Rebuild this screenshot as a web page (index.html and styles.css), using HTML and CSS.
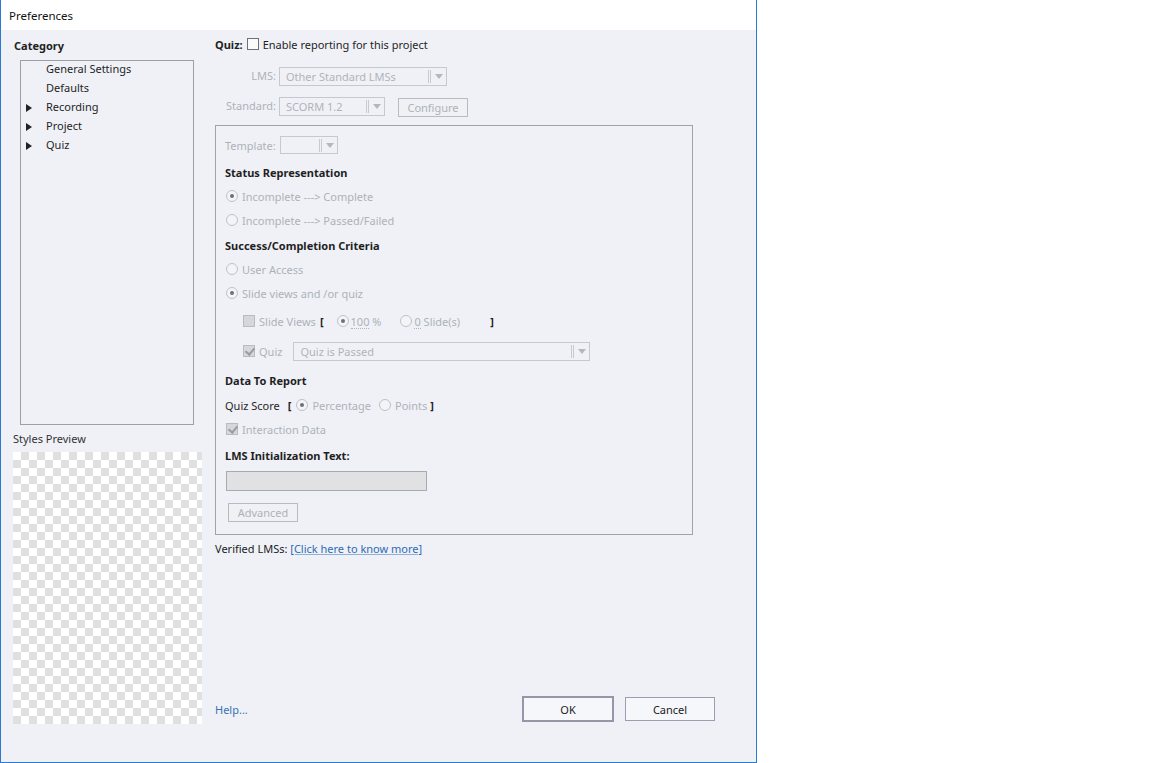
FILE: index.html
```html
<!DOCTYPE html>
<html>
<head>
<meta charset="utf-8">
<link rel="stylesheet" href="styles.css">
</head>
<body>
<div class="window">
  <div class="titlebar">Preferences</div>
  <div class="content">
    <div class="left">
      <div class="cat-title">Category</div>
      <ul class="cat-list">
        <li><span class="arrow"></span>General Settings</li>
        <li><span class="arrow"></span>Defaults</li>
        <li><span class="arrow on"></span>Recording</li>
        <li><span class="arrow on"></span>Project</li>
        <li><span class="arrow on"></span>Quiz</li>
      </ul>
      <div class="preview-label">Styles Preview</div>
      <div class="preview"></div>
    </div>
    <div class="right">
      <div class="quiz-row"><b class="quiz-b">Quiz:</b><span class="cb cb-white"></span><span>Enable reporting for this project</span></div>
      <div class="field-row lms-row">
        <span class="flabel">LMS:</span>
        <div class="dd dd-lms"><span class="dd-text">Other Standard LMSs</span><span class="dd-btn"><span class="sep"></span><span class="tri"></span></span></div>
      </div>
      <div class="field-row std-row">
        <span class="flabel">Standard:</span>
        <div class="dd dd-std"><span class="dd-text">SCORM 1.2</span><span class="dd-btn"><span class="sep"></span><span class="tri"></span></span></div>
        <span class="btn-small cfg">Configure</span>
      </div>
      <div class="group">
        <div class="tpl-row"><span class="dis">Template:</span><div class="dd dd-tpl"><span class="dd-text"></span><span class="dd-btn"><span class="sep"></span><span class="tri"></span></span></div></div>
        <div class="row r-status"><b>Status Representation</b></div>
        <div class="row"><span class="radio on"></span><span class="dis">Incomplete ---&gt; Complete</span></div>
        <div class="row"><span class="radio"></span><span class="dis">Incomplete ---&gt; Passed/Failed</span></div>
        <div class="row r-success"><b>Success/Completion Criteria</b></div>
        <div class="row"><span class="radio"></span><span class="dis">User Access</span></div>
        <div class="row"><span class="radio on"></span><span class="dis">Slide views and /or quiz</span></div>
        <div class="row indent r-slide"><span class="cb cb-dis"></span><span class="dis sv">Slide Views</span><span class="br br-l">[</span><span class="radio on r2"></span><span class="dis"><span class="dot">100</span> %</span><span class="radio r3"></span><span class="dis"><span class="dot">0</span> Slide(s)</span><span class="br br-r">]</span></div>
        <div class="row indent r-quiz"><span class="cb cb-dis checked"></span><span class="dis qz">Quiz</span><div class="dd dd-quiz"><span class="dd-text">Quiz is Passed</span><span class="dd-btn"><span class="sep"></span><span class="tri"></span></span></div></div>
        <div class="row r-data"><b>Data To Report</b></div>
        <div class="row r-score"><span class="qs">Quiz Score</span><span class="br">[</span><span class="radio on r4"></span><span class="dis">Percentage</span><span class="radio r5"></span><span class="dis">Points</span><span class="br br-r2">]</span></div>
        <div class="row"><span class="cb cb-dis checked cb-id"></span><span class="dis">Interaction Data</span></div>
        <div class="row r-init"><b>LMS Initialization Text:</b></div>
        <div class="init-input"></div>
        <span class="btn-small adv">Advanced</span>
      </div>
      <div class="verified">Verified LMSs: <a class="link">[Click here to know more]</a></div>
      <div class="footer">
        <a class="help">Help...</a>
        <span class="btn ok">OK</span>
        <span class="btn cancel">Cancel</span>
      </div>
    </div>
  </div>
</div>
</body>
</html>
```

FILE: styles.css
```css
* { box-sizing: border-box; }
body {
  margin: 0;
  background: #fff;
  font-family: "Noto Sans", "Liberation Sans", sans-serif;
  font-size: 11px;
  color: #1f1f1f;
}
.window {
  width: 757px;
  height: 763px;
  border: 1px solid #2b79d0;
  border-top: 0;
  display: flex;
  flex-direction: column;
  background: #eff1f7;
}
.titlebar {
  height: 30px;
  background: #fff;
  padding-left: 8px;
  line-height: 32px;
  font-size: 11.5px;
  color: #111;
}
.content {
  flex: 1;
  display: flex;
}
.left {
  width: 214px;
  flex: none;
  display: flex;
  flex-direction: column;
}
.cat-title {
  margin: 8px 0 0 13px;
  height: 16px;
  line-height: 16px;
  font-weight: bold;
  color: #222;
}
.cat-list {
  list-style: none;
  margin: 6px 0 0 19px;
  padding: 0;
  width: 174px;
  height: 365px;
  border: 1px solid #9c9ea8;
}
.cat-list li {
  height: 19px;
  line-height: 16px;
  display: flex;
  align-items: center;
  padding-left: 5px;
  padding-bottom: 3px;
}
.arrow {
  width: 20px;
  height: 8px;
  flex: none;
}
.arrow.on {
  width: 0;
  height: 0;
  border-top: 4px solid transparent;
  border-bottom: 4px solid transparent;
  border-left: 6px solid #222;
  margin-right: 14px;
  margin-top: 2px;
}
.preview-label {
  margin: 6px 0 0 12px;
  height: 16px;
  line-height: 16px;
  color: #333;
}
.preview {
  margin: 5px 0 0 12px;
  width: 189px;
  height: 272px;
  background: repeating-conic-gradient(#e0e0e0 0 25%, #fff 0 50%) 0 0 / 16px 16px;
}
.right {
  flex: 1;
  display: flex;
  flex-direction: column;
  padding-right: 41px;
}
.quiz-row {
  margin-top: 6px;
  height: 16px;
  display: flex;
  align-items: center;
}
.quiz-b { font-weight: bold; margin-right: 4px; }
.cb {
  width: 12px;
  height: 12px;
  flex: none;
  display: inline-block;
  position: relative;
}
.cb-white {
  border: 1px solid #707070;
  background: #fafafa;
  margin-right: 4px;
}
.cb-dis {
  border: 1px solid #b9bbc2;
  background: #d6d7dc;
  margin-right: 4px;
}
.cb-dis.checked::after {
  content: "";
  position: absolute;
  left: 3px;
  top: 0px;
  width: 4px;
  height: 7px;
  border-right: 2px solid #9a9ca3;
  border-bottom: 2px solid #9a9ca3;
  transform: rotate(40deg);
}
.dis { color: #aeb1b9; }
.field-row {
  display: flex;
  align-items: flex-start;
}
.lms-row { margin-top: 15px; }
.std-row { margin-top: 11px; }
.flabel {
  width: 61px;
  height: 19px;
  line-height: 18px;
  text-align: right;
  margin-right: 3px;
  color: #aeb1b9;
}
.dd {
  height: 19px;
  border: 1px solid #c6c8ce;
  display: flex;
  align-items: center;
  color: #b0b3ba;
  background: #eff1f7;
}
.dd-text {
  flex: 1;
  padding-left: 6px;
  white-space: nowrap;
  overflow: hidden;
}
.dd-btn {
  width: 18px;
  height: 100%;
  display: flex;
  align-items: center;
  flex: none;
}
.sep {
  width: 3px;
  height: 13px;
  border-left: 1px solid #c8cad0;
  border-right: 1px solid #c8cad0;
  margin-right: 4px;
}
.tri {
  width: 0;
  height: 0;
  border-left: 4px solid transparent;
  border-right: 4px solid transparent;
  border-top: 5px solid #b5b7bd;
}
.dd-lms { width: 168px; }
.dd-std { width: 106px; }
.btn-small {
  height: 19px;
  border: 1px solid #b9bbc2;
  color: #aeb1b9;
  display: inline-flex;
  align-items: center;
  justify-content: center;
  background: #f0f1f5;
}
.cfg { width: 70px; margin-left: 13px; margin-top: 1px; }
.group {
  margin-top: 8px;
  width: 478px;
  height: 410px;
  border: 1px solid #a3a3a3;
  padding: 0 0 0 9px;
  display: flex;
  flex-direction: column;
  align-items: flex-start;
}
.tpl-row {
  margin-top: 10px;
  display: flex;
  align-items: center;
  height: 18px;
}
.dd-tpl { width: 58px; height: 18px; margin-left: 4px; }
.dd-tpl .dd-text { padding-left: 0; }
.row {
  height: 24px;
  display: flex;
  align-items: center;
  white-space: nowrap;
}
.row b { color: #1f1f1f; }
.r-status { margin-top: 6px; }
.r-success { margin-top: 1px; }
.r-slide { margin-top: 4px; }
.r-quiz { margin-top: 6px; }
.r-data { margin-top: 5px; }
.r-score { margin-top: 1px; }
.r-init { margin-top: 2px; }
.radio {
  width: 12px;
  height: 12px;
  border: 1px solid #bfc1c7;
  border-radius: 50%;
  background: #f3f4f7;
  margin: 0 4px 0 1px;
  flex: none;
  position: relative;
}
.radio.on::after {
  content: "";
  position: absolute;
  left: 3px;
  top: 3px;
  width: 4px;
  height: 4px;
  border-radius: 50%;
  background: #6e7076;
}
.indent { padding-left: 18px; }
.sv { margin-right: 4px; }
.br { font-weight: bold; color: #222; }
.br-l { margin-right: 6px; }
.r2 { margin-left: 7px; margin-right: 2px; }
.dot { border-bottom: 1px dotted #b0b3ba; line-height: 13px; display: inline-block; }
.r3 { margin-left: 19px; margin-right: 2px; }
.br-r { margin-left: 30px; }
.qz { margin-right: 11px; }
.dd-quiz { width: 297px; height: 19px; }
.qs { margin-right: 8px; }
.r4 { margin-left: 5px; }
.r5 { margin-left: 8px; }
.br-r2 { margin-left: 3px; }
.cb-id { margin-left: 1px; margin-right: 4px; }
.init-input {
  margin-top: 4px;
  margin-left: 1px;
  width: 201px;
  height: 20px;
  border: 1px solid #a9aaae;
  background: #e1e1e3;
}
.adv { width: 70px; margin-top: 12px; margin-left: 3px; }
.verified {
  margin-top: 6px;
  height: 16px;
  line-height: 16px;
  white-space: nowrap;
  color: #222;
}
.link {
  color: #2d6cb5;
  text-decoration: underline;
  text-decoration-color: #8fb0d8;
}
.footer {
  margin-top: auto;
  margin-bottom: 40px;
  height: 26px;
  display: flex;
  align-items: center;
}
.help {
  color: #3a72b5;
  margin-right: auto;
}
.btn {
  display: inline-flex;
  align-items: center;
  justify-content: center;
  background: #f6f7fa;
  color: #222;
}
.ok {
  width: 92px;
  height: 26px;
  border: 2px solid #9397a8;
}
.cancel {
  width: 90px;
  height: 24px;
  border: 1px solid #9a9eae;
  margin-left: 11px;
}
```
